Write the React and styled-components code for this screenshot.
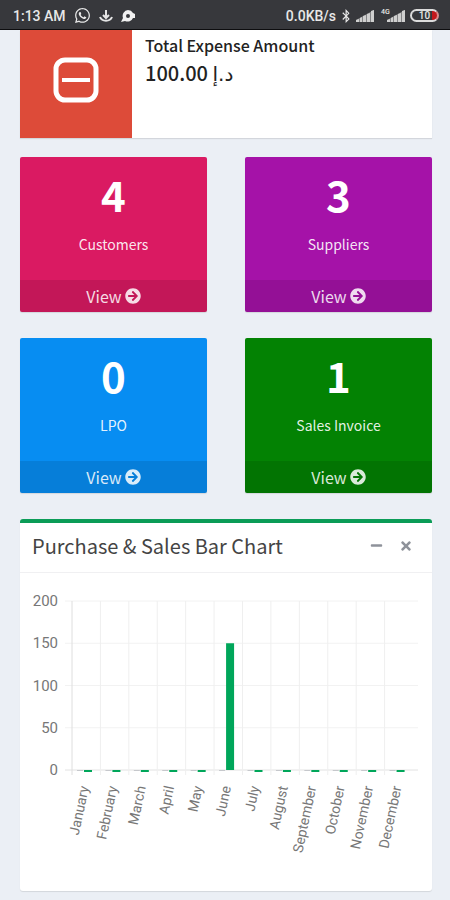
import React from 'react';
import styled, { createGlobalStyle } from 'styled-components';
import {
  FaArrowCircleRight,
  FaBluetoothB,
  FaMinus,
  FaTimes,
  FaWhatsapp,
} from 'react-icons/fa';

const TILES = [
  { count: 4, label: 'Customers', color: '#da1a62' },
  { count: 3, label: 'Suppliers', color: '#a512a8' },
  { count: 0, label: 'LPO', color: '#078df2' },
  { count: 1, label: 'Sales Invoice', color: '#038203' },
];

const MONTHS = [
  'January',
  'February',
  'March',
  'April',
  'May',
  'June',
  'July',
  'August',
  'September',
  'October',
  'November',
  'December',
];

const SALES = [0, 0, 0, 0, 0, 150, 0, 0, 0, 0, 0, 0];
const STEPS = [200, 150, 100, 50, 0];

// plot area, in units of the chart's viewBox
const PLOT = { left: 52, right: 398, top: 28, bottom: 197 };
const columnX = index => PLOT.left + (index * 341) / 12;
const valueY = value =>
  PLOT.bottom - (value * (PLOT.bottom - PLOT.top)) / 200;

const Signal = () => (
  <svg width="18" height="12" viewBox="0 0 18 12">
    <path
      d="M0 12V10L3 9V12ZM4 12V8L6 7V12ZM7 12V6L10 5V12ZM11 12V4L14 3V12ZM15 12V1L18 0V12Z"
      fill="#cfcfcf"
    />
    <path d="M0 12V10L18 0V12Z" fill="#cfcfcf" opacity="0.5" />
  </svg>
);

const BarChart = () => (
  <Chart viewBox="0 0 412 318" role="img" aria-label="Purchase and sales">
    {STEPS.map(step => (
      <g key={step}>
        <line
          x1={PLOT.left - 7}
          x2={PLOT.right}
          y1={valueY(step)}
          y2={valueY(step)}
          stroke={step ? '#f2f2f2' : '#e2e2e2'}
        />
        <text x="38" y={valueY(step) + 5} fontSize="15" textAnchor="end">
          {step}
        </text>
      </g>
    ))}
    {MONTHS.map((month, i) => {
      const x = columnX(i);
      const top = valueY(SALES[i]);
      return (
        <g key={month}>
          <line
            x1={x}
            x2={x}
            y1={PLOT.top}
            y2={PLOT.bottom + 5}
            stroke={i ? '#efefef' : '#dedede'}
          />
          <rect x={x + 5} y={PLOT.bottom} width="6" height="1" fill="#c6c8cc" />
          <rect
            x={x + 12}
            y={top}
            width="8"
            height={SALES[i] ? PLOT.bottom - top : 2}
            fill="#00a65a"
          />
          <text
            transform={`translate(${x + 17} 214) rotate(-78)`}
            fontSize="14"
            textAnchor="end"
          >
            {month}
          </text>
        </g>
      );
    })}
  </Chart>
);

export default class App extends React.Component {
  render() {
    return (
      <Page>
        <GlobalStyle />
        <StatusBar>
          <StatusGroup>
            <span>1:13 AM</span>
            <FaWhatsapp size={17} />
            <svg width="14" height="14" viewBox="0 0 14 14" fill="none" stroke="#e4e4e4" strokeWidth="2">
              <path d="M7 1V8M4 6L7 9L10 6M1 8C3 13 11 13 13 8" />
            </svg>
            <svg width="15" height="14" viewBox="0 0 15 14" fill="#f1f1f1">
              <path
                fillRule="evenodd"
                d="M7 1A6 6 0 0 1 12 4L14 5V9L12 9A6 6 0 0 1 4 12L0 13L2 9A6 6 0 0 1 7 1ZM7 5A2 2 0 1 0 7 9A2 2 0 1 0 7 5Z"
              />
            </svg>
          </StatusGroup>
          <StatusGroup $tight>
            <span>0.0KB/s</span>
            <FaBluetoothB size={14} />
            <Signal />
            <Network>
              <NetworkTag>4G</NetworkTag>
              <Signal />
            </Network>
            <Battery>10</Battery>
          </StatusGroup>
        </StatusBar>

        <Content>
          <ExpenseCard>
            <ExpenseIcon>
              <svg width="46" height="46" viewBox="0 0 46 46" fill="none" stroke="#fff">
                <rect x="3" y="3" width="40" height="40" rx="9" strokeWidth="5" />
                <path d="M9 23H37" strokeWidth="4" />
              </svg>
            </ExpenseIcon>
            <ExpenseText>
              <ExpenseTitle>Total Expense Amount</ExpenseTitle>
              <ExpenseAmount>
                100.00 <Currency>د.إ</Currency>
              </ExpenseAmount>
            </ExpenseText>
          </ExpenseCard>

          <TileGrid>
            {TILES.map(tile => (
              <Tile key={tile.label} $color={tile.color}>
                <TileCount>{tile.count}</TileCount>
                <TileLabel>{tile.label}</TileLabel>
                <TileLink href="#">
                  View
                  <FaArrowCircleRight size={16} />
                </TileLink>
              </Tile>
            ))}
          </TileGrid>

          <Panel>
            <PanelHeader>
              <PanelTitle>Purchase &amp; Sales Bar Chart</PanelTitle>
              <PanelButton aria-label="Collapse">
                <FaMinus size={13} />
              </PanelButton>
              <PanelButton aria-label="Close">
                <FaTimes size={14} />
              </PanelButton>
            </PanelHeader>
            <BarChart />
          </Panel>
        </Content>
      </Page>
    );
  }
}

const GlobalStyle = createGlobalStyle`
  * {
    box-sizing: border-box;
  }

  body {
    margin: 0;
    background: #ebeff5;
    font-family: 'Noto Sans CJK SC', 'DejaVu Sans', sans-serif;
    color: #333;
  }

  svg {
    display: block;
    flex: none;
  }
`;

const Page = styled.div`
  min-height: 100vh;
`;

const StatusBar = styled.header`
  display: flex;
  align-items: center;
  justify-content: space-between;
  height: 30px;
  padding: 2px 11px 0 13px;
  border-bottom: 1px solid #0d0d0f;
  background: #37383c;
  color: #e8e8e8;
  font: 500 14px/16px Roboto, sans-serif;
`;

const StatusGroup = styled.div`
  display: flex;
  align-items: center;
  gap: ${props => (props.$tight ? 3 : 8)}px;
`;

const Network = styled.div`
  display: flex;
  align-items: flex-end;
  margin-left: 4px;
`;

const NetworkTag = styled.span`
  align-self: flex-start;
  width: 6px;
  font-size: 7px;
  line-height: 4px;
`;

const Battery = styled.span`
  width: 29px;
  height: 13px;
  margin-left: 2px;
  border: 2px solid #dcdcdc;
  border-right-color: #d98a8a;
  border-radius: 7px;
  background: linear-gradient(90deg, transparent 80%, #c2181c 80%);
  font-size: 10px;
  line-height: 9px;
  text-align: center;
`;

const Content = styled.main`
  padding: 0 18px 8px 20px;
`;

const ExpenseCard = styled.section`
  display: flex;
  min-height: 108px;
  background: #fff;
  box-shadow: 0 1px 1px rgba(0, 0, 0, 0.1);
`;

const ExpenseIcon = styled.div`
  display: flex;
  align-items: center;
  justify-content: center;
  width: 112px;
  padding-bottom: 8px;
  background: #dd4b39;
`;

const ExpenseText = styled.div`
  flex: 1;
  padding: 3px 13px;
  color: #222;
`;

const ExpenseTitle = styled.h2`
  margin: 0;
  font-size: 16px;
  font-weight: 500;
  line-height: 24px;
`;

const ExpenseAmount = styled.p`
  margin: 0;
  font-size: 20px;
  font-weight: 500;
  line-height: 32px;
`;

const Currency = styled.span`
  font-family: 'DejaVu Sans', sans-serif;
  font-weight: 400;
`;

const TileGrid = styled.div`
  display: grid;
  grid-template-columns: 1fr 1fr;
  gap: 26px 38px;
  margin: 19px 0 26px;
`;

const Tile = styled.section`
  display: flex;
  flex-direction: column;
  align-items: center;
  overflow: hidden;
  border-radius: 2px;
  background: ${props => props.$color};
  box-shadow: 0 1px 1px rgba(0, 0, 0, 0.1);
  color: #fff;
`;

const TileCount = styled.strong`
  margin-top: 13px;
  font-size: 42px;
  font-weight: 700;
  line-height: 48px;
`;

const TileLabel = styled.span`
  margin: 14px 0 24px;
  font-size: 14px;
  line-height: 24px;
  color: rgba(255, 255, 255, 0.9);
`;

const TileLink = styled.a`
  display: flex;
  align-items: center;
  justify-content: center;
  gap: 3px;
  width: 100%;
  height: 32px;
  background: rgba(0, 0, 0, 0.1);
  color: rgba(255, 255, 255, 0.85);
  font-size: 16px;
  line-height: 24px;
  text-decoration: none;
`;

const Panel = styled.section`
  border-top: 4px solid #0b9c57;
  border-radius: 3px;
  background: #fff;
  box-shadow: 0 1px 1px rgba(0, 0, 0, 0.1);
`;

const PanelHeader = styled.div`
  display: flex;
  align-items: center;
  height: 50px;
  padding: 0 14px 4px 12px;
  border-bottom: 1px solid #f0f0f2;
`;

const PanelTitle = styled.h3`
  flex: 1;
  margin: 0;
  font-size: 20px;
  font-weight: 400;
  line-height: 24px;
  color: #444;
`;

const PanelButton = styled.button`
  display: flex;
  align-items: center;
  justify-content: center;
  width: 24px;
  height: 24px;
  margin-left: 6px;
  padding: 0;
  border: 0;
  background: none;
  color: #8e929a;
`;

const Chart = styled.svg`
  width: 100%;
  height: auto;
  font-family: Roboto, sans-serif;

  text {
    fill: #777;
  }
`;
